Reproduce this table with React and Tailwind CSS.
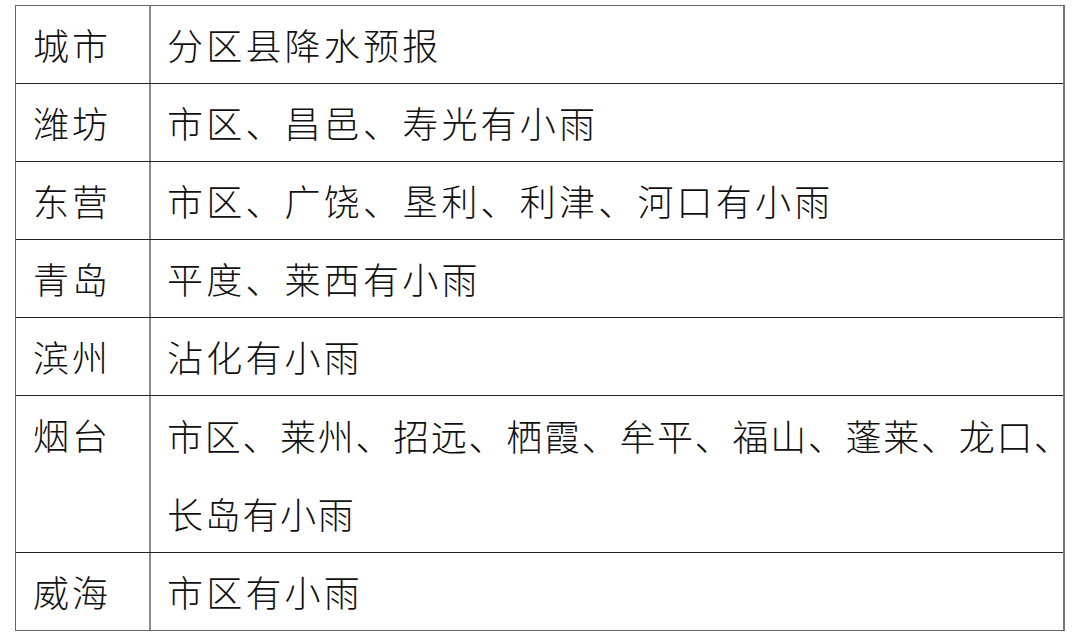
import React from "react";

// ─── Data ────────────────────────────────────────────────────────────────────
const rows = [
  { city: "潍坊", lines: ["市区、昌邑、寿光有小雨"] },
  { city: "东营", lines: ["市区、广饶、垦利、利津、河口有小雨"] },
  { city: "青岛", lines: ["平度、莱西有小雨"] },
  { city: "滨州", lines: ["沾化有小雨"] },
  { city: "烟台", lines: ["市区、莱州、招远、栖霞、牟平、福山、蓬莱、龙口、", "长岛有小雨"], tight: true },
  { city: "威海", lines: ["市区有小雨"] },
];

// ─── Row ─────────────────────────────────────────────────────────────────────
const Row = ({ city, lines, tight, first }) => (
  <div className={`grid grid-cols-[135px_1fr] ${first ? "" : "border-t border-[#222]"}`}>
    <div className="border-r-2 border-[#8a8a8a] pl-[17px] leading-[77px] tracking-[3px] whitespace-nowrap">
      {city}
    </div>
    <div
      className={`pl-[16px] whitespace-nowrap ${
        tight ? "tracking-[1.7px] leading-[78px]" : "tracking-[3.2px] leading-[77px]"
      }`}
    >
      {lines.map((l) => (
        <div key={l}>{l}</div>
      ))}
    </div>
  </div>
);

// ─── Page ────────────────────────────────────────────────────────────────────
export default function App() {
  return (
    <div
      className="w-[1080px] h-[640px] bg-white pt-[5px] pl-[15px] text-[36px] font-light text-[#111]"
      style={{ fontFamily: '"Noto Sans CJK SC", "Noto Sans", sans-serif' }}
    >
      <div className="w-[1050px] border border-[#666] border-r-2 border-r-[#777]">
        <Row city="城市" lines={["分区县降水预报"]} first />
        {rows.map((r) => (
          <Row key={r.city} {...r} />
        ))}
      </div>
    </div>
  );
}
